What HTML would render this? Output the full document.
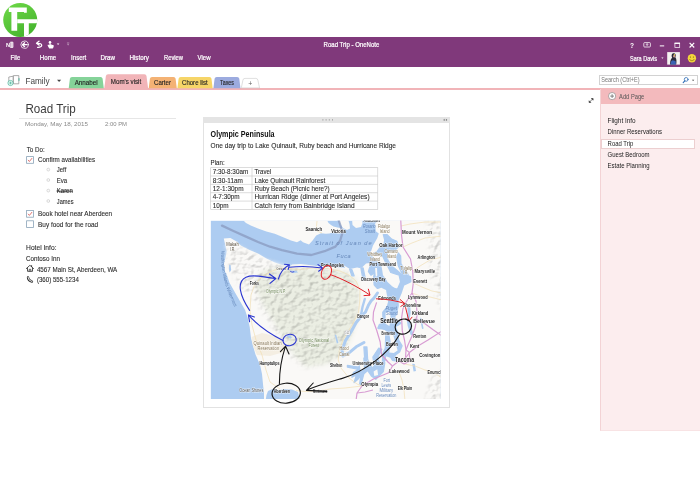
<!DOCTYPE html>
<html><head><meta charset="utf-8"><title>Road Trip - OneNote</title>
<style>
html,body{margin:0;padding:0;background:#fff;}
body{width:700px;height:500px;position:relative;overflow:hidden;font-family:"Liberation Sans",sans-serif;color:#222;}
.a{position:absolute;}
.tab{position:absolute;border-radius:3px 3px 0 0;}
svg{position:absolute;left:0;top:0;overflow:visible;}
svg text{font-family:"Liberation Sans",sans-serif;}
</style></head><body>

<!-- purple title / ribbon bar -->
<div id="bar" class="a" style="left:0;top:36.8px;width:700px;height:30.6px;background:#80397b;"></div>

<!-- section tabs row -->
<div id="tabline" class="a" style="left:0;top:87.7px;width:700px;height:2.6px;background:#f1b4b8;"></div>

<!-- search box -->
<div class="a" style="left:599.2px;top:75.4px;width:99px;height:9.8px;border:0.7px solid #d2d2d2;box-sizing:border-box;background:#fff;"></div>

<!-- page title underline -->
<div class="a" style="left:19px;top:117.9px;width:157.3px;height:0.8px;background:#e6e6e6;"></div>

<!-- note container -->
<div class="a" style="left:202.5px;top:116.7px;width:247.5px;height:291.5px;border:0.7px solid #e2e2e2;box-sizing:border-box;background:#fff;"></div>
<div class="a" style="left:202.5px;top:116.7px;width:247.5px;height:6px;background:#e4e4e4;"></div>

<!-- right page panel -->
<div class="a" style="left:600px;top:89px;width:100px;height:342px;background:#fcedee;border-left:1.2px solid #f3d3d5;border-bottom:1.5px solid #f8e3e4;box-sizing:border-box;"></div>
<div class="a" style="left:600.5px;top:87.7px;width:99.5px;height:16.2px;background:#f3babd;"></div>
<div class="a" style="left:600.5px;top:138.6px;width:94.5px;height:10px;background:#fff;border:0.6px solid #eccfd0;box-sizing:border-box;"></div>

<svg id="mapsvg" width="700" height="500" viewBox="0 0 700 500" style="opacity:0.999">
<defs>
<clipPath id="mapclip"><rect x="210.6" y="220.6" width="230.0" height="178.4"/></clipPath>
<filter id="soft" x="-5%" y="-5%" width="110%" height="110%"><feGaussianBlur stdDeviation="0.45"/></filter>
<filter id="soft2" x="-20%" y="-20%" width="140%" height="140%"><feGaussianBlur stdDeviation="2.2"/></filter>
<filter id="relief" x="0" y="0" width="100%" height="100%" color-interpolation-filters="sRGB"><feTurbulence type="fractalNoise" baseFrequency="0.17 0.21" numOctaves="2" seed="11" result="n"/><feDiffuseLighting in="n" surfaceScale="0.9" diffuseConstant="1" lighting-color="#fff" result="l"><feDistantLight azimuth="225" elevation="50"/></feDiffuseLighting><feColorMatrix in="l" type="matrix" values="0.8 0 0 0 0.37  0 0.8 0 0 0.37  0 0 0.8 0 0.37  0 0 0 1 0"/></filter>
<mask id="fmask"><g filter="url(#soft2)"><path d="M261.0 271.0 L275.0 267.5 L300.0 267.5 L322.0 269.5 L342.0 271.0 L356.0 278.0 L360.0 296.0 L357.0 320.0 L351.0 338.0 L343.0 354.0 L327.0 364.0 L306.0 367.0 L293.0 354.0 L283.0 338.0 L271.0 318.0 L261.0 301.0 L254.5 285.0 Z" fill="#fff"/></g></mask>
<mask id="hmask"><g filter="url(#soft2)"><path d="M226.0 243.0 L240.0 247.0 L262.0 259.0 L290.0 268.0 L325.0 269.0 L348.0 273.0 L357.0 290.0 L356.0 320.0 L349.0 340.0 L340.0 355.0 L322.0 364.0 L303.0 368.0 L290.0 356.0 L280.0 340.0 L268.0 320.0 L256.0 302.0 L246.0 292.0 L236.0 282.0 L229.0 264.0 Z" fill="#fff"/><path d="M427.0 219.0 L443.0 219.0 L443.0 312.0 L437.0 300.0 L431.0 270.0 L429.0 245.0 Z" fill="#fff"/><path d="M433.0 377.0 L443.0 370.0 L443.0 401.0 L424.0 401.0 Z" fill="#fff"/></g></mask>
</defs>
<g id="map" clip-path="url(#mapclip)">
<rect x="210.6" y="220.6" width="230.0" height="178.4" fill="#adccf1"/>
<g filter="url(#soft)">
<path d="M243.0 220.0 L246.0 223.0 L250.8 225.4 L258.0 228.4 L266.4 231.4 L274.8 233.8 L282.0 236.8 L285.0 238.0 L291.0 240.4 L297.0 242.2 L300.6 240.2 L303.0 242.2 L309.0 244.6 L312.6 240.4 L316.2 235.6 L321.0 233.2 L325.8 233.8 L329.4 233.4 L333.0 232.6 L338.0 233.6 L343.0 232.6 L344.4 230.4 L342.0 228.2 L337.5 227.4 L333.5 226.6 L331.0 225.0 L328.5 223.0 L326.5 219.0 L326.0 215.0 L243.0 215.0 Z" fill="#faf9f7"/>
<path d="M223.8 238.6 L230.4 238.0 L235.8 241.0 L241.2 245.8 L249.6 250.0 L258.0 253.6 L266.4 258.4 L274.8 262.6 L282.0 265.0 L290.0 266.2 L292.2 264.6 L300.6 264.0 L309.0 265.0 L318.6 266.2 L325.8 265.4 L333.0 266.8 L339.0 267.4 L345.0 268.0 L343.6 265.2 L347.4 267.4 L350.0 269.1 L357.1 267.4 L359.4 268.0 L362.0 267.4 L366.1 263.6 L371.7 262.7 L372.9 266.9 L377.3 261.3 L374.3 258.0 L370.2 254.1 L372.9 245.7 L377.3 238.0 L378.8 233.5 L375.8 231.3 L375.1 223.5 L378.8 220.1 L442.6 218.6 L442.6 401.0 L300.0 401.0 L298.0 392.0 L292.0 389.5 L285.0 389.0 L279.0 390.0 L272.0 389.3 L268.0 391.0 L266.5 395.0 L265.5 401.0 L264.0 401.0 L264.0 392.2 L263.3 387.0 L262.0 374.0 L260.1 364.9 L255.5 354.5 L252.9 345.4 L251.0 338.0 L249.7 327.0 L247.7 317.9 L245.1 310.1 L239.9 301.0 L234.7 291.9 L229.5 282.8 L226.9 275.0 L225.0 271.6 L223.8 264.4 L225.0 259.6 L226.8 251.2 L225.0 244.0 Z" fill="#faf9f7"/>
<path d="M251.5 337.0 L262.0 333.0 L275.0 336.0 L284.0 342.0 L284.0 352.0 L270.0 356.0 L257.0 355.0 L253.0 346.0 Z" fill="#f4eee2"/>
<g mask="url(#fmask)"><rect x="240" y="255" width="130" height="125" fill="#ebeee3"/></g>
<g mask="url(#hmask)" style="mix-blend-mode:multiply"><rect x="210" y="220" width="232" height="180" filter="url(#relief)"/></g>
<path d="M371.9 264.7 L376.3 261.9 L380.1 264.7 L381.2 270.8 L382.0 275.8 L384.6 279.1 L386.5 282.5 L391.1 286.9 L394.8 289.2 L397.8 289.7 L401.1 281.9 L399.6 275.2 L404.8 274.7 L410.1 276.9 L410.4 281.4 L403.4 284.7 L400.8 292.5 L397.4 300.3 L397.8 305.8 L395.6 314.7 L393.7 317.0 L396.3 320.3 L400.4 323.1 L397.8 324.8 L394.8 326.4 L397.1 332.6 L398.2 340.3 L401.6 345.9 L399.3 351.5 L394.8 354.8 L395.6 360.4 L392.6 359.8 L391.1 357.0 L385.1 354.8 L384.7 360.4 L382.8 362.6 L383.2 353.7 L385.8 348.1 L386.2 334.8 L388.8 332.6 L385.5 329.2 L381.3 328.1 L378.3 328.1 L379.8 324.8 L383.6 323.7 L383.2 312.5 L387.7 307.0 L389.2 301.9 L387.0 289.2 L381.3 286.4 L377.6 288.0 L374.6 284.7 L374.1 276.9 L375.6 271.3 L371.1 274.7 L368.9 271.3 L370.4 266.9 Z" fill="#adccf1" stroke="#adccf1" stroke-width="2.2" stroke-linejoin="round"/>
<path d="M400.6 275.2 L397.6 274.7 L390.8 272.5 L388.6 268.0 L385.6 262.4 L382.6 255.8 L376.6 254.6 L374.3 253.0 L377.3 251.3 L379.6 248.0 L383.3 247.4 L384.8 240.2 L383.3 234.6 L387.1 234.6 L391.6 239.1 L396.8 241.3 L398.3 246.9 L394.6 250.8 L388.6 250.8 L387.1 254.6 L387.8 260.2 L390.8 265.2 L395.3 269.1 L400.6 273.6 Z" fill="#adccf1" stroke="#adccf1" stroke-width="1.3" stroke-linejoin="round"/>
<path d="M402.1 273.6 L398.3 265.8 L396.8 256.9 L398.3 253.0 L400.6 255.8 L400.9 263.6 L405.1 270.2 L408.1 274.7 L405.8 275.2 Z" fill="#adccf1" stroke="#adccf1" stroke-width="1.3" stroke-linejoin="round"/>
<path d="M360.9 268.0 L363.1 268.0 L365.4 279.1 L363.1 280.2 Z" fill="#adccf1" stroke="#adccf1" stroke-width="1.3" stroke-linejoin="round"/>
<path d="M349.6 269.1 L351.9 269.7 L354.1 275.8 L351.9 275.8 Z" fill="#adccf1" stroke="#adccf1" stroke-width="1.3" stroke-linejoin="round"/>
<path d="M384.8 362.6 L383.3 371.5 L375.8 379.3 L371.4 376.0 L367.6 370.4 L363.9 373.7 L360.9 384.9 L359.7 383.8 L360.9 374.9 L357.9 379.3 L354.1 382.6 L356.4 374.9 L351.9 377.1 L353.4 372.6 L358.6 369.3 L347.4 367.1 L347.4 365.4 L358.6 367.1 L361.6 361.5 L364.6 357.0 L363.9 347.0 L366.9 347.0 L367.6 359.3 L372.1 368.2 L374.3 365.9 L372.9 357.0 L378.8 348.1 L381.8 349.3 L377.3 358.2 L380.3 363.7 Z" fill="#adccf1" stroke="#adccf1" stroke-width="1.3" stroke-linejoin="round"/>
<path d="M377.5 293.0 L374.0 298.0 L371.0 301.0 L368.5 305.0 L365.5 312.0 L361.0 316.5 L356.2 322.5 L351.4 331.2 L345.4 340.8 L342.0 350.4 L343.0 356.0 L349.0 352.8 L356.2 346.8 L364.0 342.5" fill="none" stroke="#adccf1" stroke-width="3" stroke-linejoin="round" stroke-linecap="round"/>
<path d="M364.8 299.0 L362.5 307.0 L361.0 315.0" fill="none" stroke="#adccf1" stroke-width="2.4" stroke-linejoin="round" stroke-linecap="round"/>
<path d="M408.8 306.4 L409.2 312.5 L408.1 319.2 L409.2 325.9 L411.8 333.7" fill="none" stroke="#adccf1" stroke-width="3" stroke-linejoin="round" stroke-linecap="round"/>
<path d="M420.8 318.6 L422.7 328.1" fill="none" stroke="#adccf1" stroke-width="1.6" stroke-linecap="round"/>
<path d="M229.2 264.5 L230.6 265.0 L231.2 270.0 L229.6 272.5 L228.8 269.0 Z" fill="#adccf1"/>
<path d="M287.5 269.1 L293.5 273.0 L298.0 272.5 L296.5 270.8 L291.2 270.8 Z" fill="#adccf1"/>
<path d="M286.0 335.9 L290.5 338.7 L292.0 337.6 L289.0 334.8 Z" fill="#adccf1"/>
<path d="M334.7 334.8 L336.9 343.7 L338.4 342.6 L336.2 334.8 Z" fill="#adccf1"/>
<path d="M412.2 363.8 L414.8 364.0 L416.0 371.0 L413.6 371.6 Z" fill="#adccf1"/>
<path d="M389.3 333.7 L393.1 334.8 L395.7 343.7 L397.6 350.4 L393.8 353.1 L389.3 352.6 L390.8 342.6 Z" fill="#faf9f7"/>
<path d="M385.6 312.5 L390.1 312.0 L390.8 320.3 L389.3 325.9 L385.6 323.7 Z" fill="#faf9f7"/>
<path d="M373.6 371.5 L377.3 369.3 L378.1 374.9 L374.3 376.0 Z" fill="#faf9f7"/>
<path d="M358.6 359.3 L363.1 357.0 L363.9 368.2 L360.9 371.5 Z" fill="#faf9f7"/>
<path d="M375.1 268.0 L377.0 268.0 L377.3 275.8 L375.8 276.9 Z" fill="#faf9f7"/>
<path d="M339.0 219.0 L340.0 224.0 L343.0 228.0 L347.0 230.0 L350.0 228.5 L349.5 224.0 L348.0 219.0 Z" fill="#faf9f7"/>
<path d="M352.0 219.0 L352.5 225.0 L356.0 228.0 L361.0 227.0 L362.5 223.0 L362.0 219.0 Z" fill="#faf9f7"/>
</g>
<path d="M222 225.6 L234 231.2 L246 236.6 L258 242 L270 246.7 L282 250.1 L297 253.6 L311.4 255 L324.6 251.2 L335.4 246.6 L340.2 240.4 L342.4 233 L340.6 226 L338.6 220" fill="none" stroke="#8a99bf" stroke-opacity="0.75" stroke-width="2.3" stroke-linejoin="round" stroke-linecap="round" filter="url(#soft)"/>
<path d="M359.8 300.0 L358.6 312.0 L352.6 324.0 L343.0 339.6 L339.4 350.4 L338.2 360.0 L341.0 368.0 L349.0 378.0 L357.0 384.0 L362.0 386.0" fill="none" stroke="#f0dcae" stroke-width="0.9" stroke-opacity="0.7" stroke-linejoin="round"/>
<path d="M362.0 386.0 L345.0 388.0 L330.0 389.0 L318.0 391.0 L305.0 391.5 L296.0 390.5" fill="none" stroke="#f0dcae" stroke-width="0.9" stroke-opacity="0.7" stroke-linejoin="round"/>
<path d="M359.8 300.0 L360.0 290.0 L356.0 281.0 L349.0 275.0 L340.0 271.0 L327.0 268.5 L312.0 268.0 L300.0 269.5 L290.0 268.5 L280.0 268.0 L270.0 272.0 L262.0 277.0 L255.0 284.0 L251.0 295.0 L250.0 310.0 L252.0 325.0 L256.0 340.0 L262.0 355.0 L266.0 370.0 L270.0 382.0 L280.0 389.0" fill="none" stroke="#f0dcae" stroke-width="0.9" stroke-opacity="0.7" stroke-linejoin="round"/>
<path d="M413.3 283.0 L422.0 287.0 L432.0 291.0 L442.0 293.0" fill="none" stroke="#f0dcae" stroke-width="0.9" stroke-opacity="0.7" stroke-linejoin="round"/>
<path d="M412.0 293.0 L420.0 296.0 L430.0 297.0 L442.0 300.0" fill="none" stroke="#f0dcae" stroke-width="0.9" stroke-opacity="0.7" stroke-linejoin="round"/>
<path d="M403.0 247.0 L412.0 243.0 L425.0 238.0 L442.0 236.0" fill="none" stroke="#f0dcae" stroke-width="0.9" stroke-opacity="0.7" stroke-linejoin="round"/>
<path d="M401.0 226.0 L410.0 224.0 L425.0 222.0 L442.0 222.0" fill="none" stroke="#f0dcae" stroke-width="0.9" stroke-opacity="0.7" stroke-linejoin="round"/>
<path d="M413.0 271.0 L420.0 266.0 L430.0 260.0 L442.0 257.0" fill="none" stroke="#f0dcae" stroke-width="0.9" stroke-opacity="0.7" stroke-linejoin="round"/>
<path d="M404.5 364.0 L415.0 366.0 L425.0 370.0 L433.0 372.0 L442.0 378.0" fill="none" stroke="#f0dcae" stroke-width="0.9" stroke-opacity="0.7" stroke-linejoin="round"/>
<path d="M399.0 372.0 L402.0 380.0 L404.0 390.0 L405.0 401.0" fill="none" stroke="#f0dcae" stroke-width="0.9" stroke-opacity="0.7" stroke-linejoin="round"/>
<path d="M317.0 221.0 L316.5 226.0 L317.0 231.0 L322.0 233.0" fill="none" stroke="#f0dcae" stroke-width="0.9" stroke-opacity="0.7" stroke-linejoin="round"/>
<path d="M400.7 219.0 L401.5 235.0 L403.0 247.0 L410.5 259.0 L412.7 271.0 L413.3 283.0 L412.0 293.0 L405.5 303.0 L402.9 309.0 L401.6 318.0 L402.3 331.0 L404.5 340.0 L406.0 350.0 L405.5 358.0 L399.0 361.0 L392.5 366.0 L388.6 372.7 L373.0 379.2 L362.0 386.0 L357.0 393.0 L356.0 401.0" fill="none" stroke="#d89cd3" stroke-width="1.2" stroke-linejoin="round"/>
<path d="M412.0 293.0 L416.0 301.0 L417.2 314.0 L415.3 327.0 L412.0 336.0 L408.0 345.0 L406.0 350.0" fill="none" stroke="#d89cd3" stroke-width="1.2" stroke-linejoin="round"/>
<path d="M414.6 318.0 L424.0 323.0 L432.8 329.6 L442.0 336.0" fill="none" stroke="#d89cd3" stroke-width="1.2" stroke-linejoin="round"/>
<path d="M376.6 302.4 L373.5 312.0 L373.0 320.0 L376.6 330.0 L380.2 342.0 L381.5 354.5 L388.0 362.0 L392.5 366.0" fill="none" stroke="#d89cd3" stroke-width="1.2" stroke-linejoin="round"/>
<path d="M405.5 358.0 L410.0 352.0 L418.0 346.0 L428.0 340.0 L442.0 331.0" fill="none" stroke="#d89cd3" stroke-width="1.2" stroke-linejoin="round"/>
<path d="M399.0 361.0 L404.0 364.0 L410.0 361.0 L409.0 352.0 L406.0 350.0" fill="none" stroke="#d89cd3" stroke-width="1.2" stroke-linejoin="round"/>
<path d="M357.0 393.0 L365.0 392.0 L373.0 390.0" fill="none" stroke="#d89cd3" stroke-width="1.2" stroke-linejoin="round"/>
<rect x="344.6" y="330.4" width="5.4" height="4.6" rx="1.6" fill="#fff" stroke="#aaa" stroke-width="0.4"/>
<text x="226.2" y="245.8" font-size="5" fill="#5e5443" textLength="12.6" lengthAdjust="spacingAndGlyphs" stroke="#fff" stroke-opacity="0.7" stroke-width="0.9" paint-order="stroke">Makah</text>
<text x="229.8" y="250.6" font-size="5" fill="#5e5443" textLength="5.4" lengthAdjust="spacingAndGlyphs" stroke="#fff" stroke-opacity="0.7" stroke-width="0.9" paint-order="stroke">I.R.</text>
<text x="305.4" y="231.4" font-size="5.6" fill="#1e1e1e" font-weight="bold" textLength="16.8" lengthAdjust="spacingAndGlyphs" stroke="#fff" stroke-opacity="0.7" stroke-width="0.9" paint-order="stroke">Saanich</text>
<text x="331.2" y="233.2" font-size="5.6" fill="#1e1e1e" font-weight="bold" textLength="14.4" lengthAdjust="spacingAndGlyphs" stroke="#fff" stroke-opacity="0.7" stroke-width="0.9" paint-order="stroke">Victoria</text>
<text x="321.0" y="266.6" font-size="5" fill="#1e1e1e" font-weight="bold" textLength="22.8" lengthAdjust="spacingAndGlyphs" stroke="#fff" stroke-opacity="0.7" stroke-width="0.9" paint-order="stroke">Port Angeles</text>
<text x="276.6" y="269.6" font-size="4.4" fill="#1e1e1e" textLength="9.4" lengthAdjust="spacingAndGlyphs" stroke="#fff" stroke-opacity="0.7" stroke-width="0.9" paint-order="stroke">Crescent</text>
<text x="402.0" y="234.0" font-size="5.8" fill="#1e1e1e" font-weight="bold" textLength="30.0" lengthAdjust="spacingAndGlyphs" stroke="#fff" stroke-opacity="0.7" stroke-width="0.9" paint-order="stroke">Mount Vernon</text>
<text x="379.2" y="247.4" font-size="5.6" fill="#1e1e1e" font-weight="bold" textLength="23.4" lengthAdjust="spacingAndGlyphs" stroke="#fff" stroke-opacity="0.7" stroke-width="0.9" paint-order="stroke">Oak Harbor</text>
<text x="417.6" y="258.6" font-size="5.4" fill="#1e1e1e" font-weight="bold" textLength="17.4" lengthAdjust="spacingAndGlyphs" stroke="#fff" stroke-opacity="0.7" stroke-width="0.9" paint-order="stroke">Arlington</text>
<text x="414.6" y="272.6" font-size="5.6" fill="#1e1e1e" font-weight="bold" textLength="20.4" lengthAdjust="spacingAndGlyphs" stroke="#fff" stroke-opacity="0.7" stroke-width="0.9" paint-order="stroke">Marysville</text>
<text x="369.6" y="266.4" font-size="5.2" fill="#1e1e1e" font-weight="bold" textLength="26.4" lengthAdjust="spacingAndGlyphs" stroke="#fff" stroke-opacity="0.7" stroke-width="0.9" paint-order="stroke">Port Townsend</text>
<text x="367.2" y="256.4" font-size="4.6" fill="#857455" textLength="15.0" lengthAdjust="spacingAndGlyphs" stroke="#fff" stroke-opacity="0.7" stroke-width="0.9" paint-order="stroke">Whidbey</text>
<text x="370.2" y="260.8" font-size="4.6" fill="#857455" textLength="9.6" lengthAdjust="spacingAndGlyphs" stroke="#fff" stroke-opacity="0.7" stroke-width="0.9" paint-order="stroke">Island</text>
<text x="384.6" y="253.4" font-size="4.6" fill="#857455" textLength="13.2" lengthAdjust="spacingAndGlyphs" stroke="#fff" stroke-opacity="0.7" stroke-width="0.9" paint-order="stroke">Camano</text>
<text x="387.0" y="257.8" font-size="4.6" fill="#857455" textLength="9.0" lengthAdjust="spacingAndGlyphs" stroke="#fff" stroke-opacity="0.7" stroke-width="0.9" paint-order="stroke">Island</text>
<text x="400.2" y="269.6" font-size="4.6" fill="#857455" textLength="12.0" lengthAdjust="spacingAndGlyphs" stroke="#fff" stroke-opacity="0.7" stroke-width="0.9" paint-order="stroke">Tulalip</text>
<text x="403.2" y="274.4" font-size="4.6" fill="#857455" textLength="4.8" lengthAdjust="spacingAndGlyphs" stroke="#fff" stroke-opacity="0.7" stroke-width="0.9" paint-order="stroke">I.R.</text>
<text x="378.0" y="228.2" font-size="4.6" fill="#857455" textLength="12.0" lengthAdjust="spacingAndGlyphs" stroke="#fff" stroke-opacity="0.7" stroke-width="0.9" paint-order="stroke">Fidalgo</text>
<text x="379.8" y="233.4" font-size="4.6" fill="#857455" textLength="9.6" lengthAdjust="spacingAndGlyphs" stroke="#fff" stroke-opacity="0.7" stroke-width="0.9" paint-order="stroke">Island</text>
<text x="363.0" y="228.2" font-size="4.6" fill="#6486b8" font-style="italic" textLength="12.6" lengthAdjust="spacingAndGlyphs">Rosario</text>
<text x="364.8" y="233.0" font-size="4.6" fill="#6486b8" font-style="italic" textLength="10.2" lengthAdjust="spacingAndGlyphs">Strait</text>
<text x="363.6" y="222.2" font-size="4.8" fill="#1e1e1e" font-weight="bold" textLength="16.4" lengthAdjust="spacingAndGlyphs" stroke="#fff" stroke-opacity="0.7" stroke-width="0.9" paint-order="stroke">Anacortes</text>
<text x="361.3" y="280.6" font-size="5" fill="#1e1e1e" font-weight="bold" textLength="24.1" lengthAdjust="spacingAndGlyphs" stroke="#fff" stroke-opacity="0.7" stroke-width="0.9" paint-order="stroke">Discovery Bay</text>
<text x="413.3" y="282.8" font-size="5.2" fill="#1e1e1e" font-weight="bold" textLength="13.7" lengthAdjust="spacingAndGlyphs" stroke="#fff" stroke-opacity="0.7" stroke-width="0.9" paint-order="stroke">Everett</text>
<text x="408.1" y="299.0" font-size="5.2" fill="#1e1e1e" font-weight="bold" textLength="19.5" lengthAdjust="spacingAndGlyphs" stroke="#fff" stroke-opacity="0.7" stroke-width="0.9" paint-order="stroke">Lynnwood</text>
<text x="402.9" y="307.4" font-size="5.2" fill="#1e1e1e" font-weight="bold" textLength="18.2" lengthAdjust="spacingAndGlyphs" stroke="#fff" stroke-opacity="0.7" stroke-width="0.9" paint-order="stroke">Shoreline</text>
<text x="412.0" y="315.2" font-size="5.4" fill="#1e1e1e" font-weight="bold" textLength="16.3" lengthAdjust="spacingAndGlyphs" stroke="#fff" stroke-opacity="0.7" stroke-width="0.9" paint-order="stroke">Kirkland</text>
<text x="380.2" y="323.0" font-size="7" fill="#1e1e1e" font-weight="bold" textLength="17.5" lengthAdjust="spacingAndGlyphs" stroke="#fff" stroke-opacity="0.7" stroke-width="0.9" paint-order="stroke">Seattle</text>
<text x="413.3" y="322.8" font-size="6.2" fill="#1e1e1e" font-weight="bold" textLength="21.5" lengthAdjust="spacingAndGlyphs" stroke="#fff" stroke-opacity="0.7" stroke-width="0.9" paint-order="stroke">Bellevue</text>
<text x="381.5" y="335.2" font-size="4.8" fill="#1e1e1e" font-weight="bold" textLength="13.6" lengthAdjust="spacingAndGlyphs" stroke="#fff" stroke-opacity="0.7" stroke-width="0.9" paint-order="stroke">Bremerton</text>
<text x="413.3" y="337.8" font-size="5" fill="#1e1e1e" font-weight="bold" textLength="13.0" lengthAdjust="spacingAndGlyphs" stroke="#fff" stroke-opacity="0.7" stroke-width="0.9" paint-order="stroke">Renton</text>
<text x="385.4" y="309.8" font-size="4.8" fill="#6486b8" font-style="italic" textLength="11.6" lengthAdjust="spacingAndGlyphs">Puget</text>
<text x="386.0" y="315.4" font-size="4.8" fill="#6486b8" font-style="italic" textLength="11.7" lengthAdjust="spacingAndGlyphs">Sound</text>
<text x="357.2" y="317.6" font-size="4.8" fill="#1e1e1e" font-weight="bold" textLength="11.9" lengthAdjust="spacingAndGlyphs" stroke="#fff" stroke-opacity="0.7" stroke-width="0.9" paint-order="stroke">Bangor</text>
<text x="378.2" y="300.0" font-size="5" fill="#1e1e1e" font-weight="bold" textLength="17.6" lengthAdjust="spacingAndGlyphs" stroke="#fff" stroke-opacity="0.7" stroke-width="0.9" paint-order="stroke">Edmonds</text>
<text x="386.0" y="345.8" font-size="5" fill="#1e1e1e" font-weight="bold" textLength="11.7" lengthAdjust="spacingAndGlyphs" stroke="#fff" stroke-opacity="0.7" stroke-width="0.9" paint-order="stroke">Burien</text>
<text x="410.0" y="347.8" font-size="5.4" fill="#1e1e1e" font-weight="bold" textLength="9.2" lengthAdjust="spacingAndGlyphs" stroke="#fff" stroke-opacity="0.7" stroke-width="0.9" paint-order="stroke">Kent</text>
<text x="395.1" y="361.8" font-size="6.4" fill="#1e1e1e" font-weight="bold" textLength="18.9" lengthAdjust="spacingAndGlyphs" stroke="#fff" stroke-opacity="0.7" stroke-width="0.9" paint-order="stroke">Tacoma</text>
<text x="419.2" y="357.2" font-size="5.4" fill="#1e1e1e" font-weight="bold" textLength="21.2" lengthAdjust="spacingAndGlyphs" stroke="#fff" stroke-opacity="0.7" stroke-width="0.9" paint-order="stroke">Covington</text>
<text x="389.3" y="372.6" font-size="5" fill="#1e1e1e" font-weight="bold" textLength="20.1" lengthAdjust="spacingAndGlyphs" stroke="#fff" stroke-opacity="0.7" stroke-width="0.9" paint-order="stroke">Lakewood</text>
<text x="427.6" y="373.8" font-size="5" fill="#1e1e1e" font-weight="bold" textLength="18.4" lengthAdjust="spacingAndGlyphs" stroke="#fff" stroke-opacity="0.7" stroke-width="0.9" paint-order="stroke">Enumclaw</text>
<text x="352.6" y="364.8" font-size="4.8" fill="#1e1e1e" font-weight="bold" textLength="30.8" lengthAdjust="spacingAndGlyphs" stroke="#fff" stroke-opacity="0.7" stroke-width="0.9" paint-order="stroke">University Place</text>
<text x="361.3" y="386.4" font-size="5.8" fill="#1e1e1e" font-weight="bold" textLength="16.9" lengthAdjust="spacingAndGlyphs" stroke="#fff" stroke-opacity="0.7" stroke-width="0.9" paint-order="stroke">Olympia</text>
<text x="383.4" y="381.8" font-size="4.6" fill="#6486b8" textLength="6.6" lengthAdjust="spacingAndGlyphs" stroke="#fff" stroke-opacity="0.7" stroke-width="0.9" paint-order="stroke">Fort</text>
<text x="381.5" y="386.6" font-size="4.6" fill="#6486b8" textLength="9.7" lengthAdjust="spacingAndGlyphs" stroke="#fff" stroke-opacity="0.7" stroke-width="0.9" paint-order="stroke">Lewis</text>
<text x="379.5" y="391.8" font-size="4.6" fill="#6486b8" textLength="13.7" lengthAdjust="spacingAndGlyphs" stroke="#fff" stroke-opacity="0.7" stroke-width="0.9" paint-order="stroke">Military</text>
<text x="376.3" y="396.6" font-size="4.6" fill="#6486b8" textLength="20.1" lengthAdjust="spacingAndGlyphs" stroke="#fff" stroke-opacity="0.7" stroke-width="0.9" paint-order="stroke">Reservation</text>
<text x="397.7" y="389.8" font-size="5" fill="#1e1e1e" font-weight="bold" textLength="14.3" lengthAdjust="spacingAndGlyphs" stroke="#fff" stroke-opacity="0.7" stroke-width="0.9" paint-order="stroke">Elk Plain</text>
<text x="298.7" y="342.0" font-size="4.8" fill="#6e8656" textLength="30.5" lengthAdjust="spacingAndGlyphs" stroke="#fff" stroke-opacity="0.7" stroke-width="0.9" paint-order="stroke">Olympic National</text>
<text x="308.4" y="346.6" font-size="4.8" fill="#6e8656" textLength="10.4" lengthAdjust="spacingAndGlyphs" stroke="#fff" stroke-opacity="0.7" stroke-width="0.9" paint-order="stroke">Forest</text>
<text x="339.5" y="350.4" font-size="4.8" fill="#857455" textLength="9.0" lengthAdjust="spacingAndGlyphs" stroke="#fff" stroke-opacity="0.7" stroke-width="0.9" paint-order="stroke">Hood</text>
<text x="339.0" y="356.2" font-size="4.8" fill="#857455" textLength="10.4" lengthAdjust="spacingAndGlyphs" stroke="#fff" stroke-opacity="0.7" stroke-width="0.9" paint-order="stroke">Canal</text>
<text x="329.9" y="367.2" font-size="4.8" fill="#1e1e1e" font-weight="bold" textLength="12.3" lengthAdjust="spacingAndGlyphs" stroke="#fff" stroke-opacity="0.7" stroke-width="0.9" paint-order="stroke">Shelton</text>
<text x="313.0" y="392.8" font-size="4.8" fill="#1e1e1e" font-weight="bold" textLength="14.3" lengthAdjust="spacingAndGlyphs" stroke="#fff" stroke-opacity="0.7" stroke-width="0.9" paint-order="stroke">Montesano</text>
<text x="253.6" y="344.6" font-size="5.2" fill="#857455" textLength="27.9" lengthAdjust="spacingAndGlyphs" stroke="#fff" stroke-opacity="0.7" stroke-width="0.9" paint-order="stroke">Quinault Indian</text>
<text x="257.5" y="350.0" font-size="5.2" fill="#857455" textLength="21.5" lengthAdjust="spacingAndGlyphs" stroke="#fff" stroke-opacity="0.7" stroke-width="0.9" paint-order="stroke">Reservation</text>
<text x="259.4" y="364.6" font-size="4.8" fill="#1e1e1e" font-weight="bold" textLength="20.2" lengthAdjust="spacingAndGlyphs" stroke="#fff" stroke-opacity="0.7" stroke-width="0.9" paint-order="stroke">Humptulips</text>
<text x="239.3" y="392.4" font-size="4.8" fill="#555" textLength="24.0" lengthAdjust="spacingAndGlyphs" stroke="#fff" stroke-opacity="0.7" stroke-width="0.9" paint-order="stroke">Ocean Shores</text>
<text x="273.7" y="393.2" font-size="4.8" fill="#1e1e1e" font-weight="bold" textLength="16.3" lengthAdjust="spacingAndGlyphs" stroke="#fff" stroke-opacity="0.7" stroke-width="0.9" paint-order="stroke">Aberdeen</text>
<text x="249.7" y="285.4" font-size="4.8" fill="#1e1e1e" font-weight="bold" textLength="9.1" lengthAdjust="spacingAndGlyphs" stroke="#fff" stroke-opacity="0.7" stroke-width="0.9" paint-order="stroke">Forks</text>
<text x="265.9" y="293.2" font-size="4.8" fill="#6e8656" textLength="20.1" lengthAdjust="spacingAndGlyphs" stroke="#fff" stroke-opacity="0.7" stroke-width="0.9" paint-order="stroke">Olympic N.P.</text>
<text x="345.3" y="334.0" font-size="3" fill="#666" textLength="4.0" lengthAdjust="spacingAndGlyphs" stroke="#fff" stroke-opacity="0.7" stroke-width="0.9" paint-order="stroke">101</text>
<text x="315" y="245.4" font-size="5.6" fill="#6486b8" font-style="italic" textLength="56.5" lengthAdjust="spacing">Strait of Juan de</text>
<text x="336.6" y="258" font-size="5.6" fill="#6486b8" font-style="italic" textLength="14" lengthAdjust="spacing">Fuca</text>
<path id="wiw" d="M221.6 251 C220 268 225 288 234.5 307" fill="none"/>
<text font-size="4.6" fill="#5f82b6"><textPath href="#wiw" textLength="58" lengthAdjust="spacingAndGlyphs">Washington Islands Wilderness</textPath></text>
</g>
<g id="ink">
<path d="M283 340.5 C274 336 260 328 248.6 315.2 M248.4 315 L249.6 321.8 M248.4 315 L254.4 317" fill="none" stroke="#2a35d0" stroke-width="1.1" stroke-linecap="round" stroke-linejoin="round"/>
<path d="M249.6 310.4 C240 296 236 282 246 277.2 C254 273.5 263 277.5 275.2 278.4 M269.4 274 L275.8 278.5 L270 283.4" fill="none" stroke="#2a35d0" stroke-width="1.1" stroke-linecap="round" stroke-linejoin="round"/>
<path d="M278.4 279 C280 273 283.5 268 289 265 M284.5 264.2 L289.4 264.8 L288.2 269.4" fill="none" stroke="#2a35d0" stroke-width="1.1" stroke-linecap="round" stroke-linejoin="round"/>
<path d="M289.4 267.2 C300 266 311 266.2 322.2 268 M318 264.6 L322.8 268.1 L318.6 271.2" fill="none" stroke="#2a35d0" stroke-width="1.1" stroke-linecap="round" stroke-linejoin="round"/>
<path d="M290.5 271.6 q1.6 1.4 3.4 0.2" fill="none" stroke="#2a35d0" stroke-width="0.8" stroke-linecap="round" stroke-linejoin="round"/>
<ellipse cx="289.6" cy="340" rx="6.7" ry="5.7" fill="none" stroke="#2a35d0" stroke-width="1.1" transform="rotate(-12 289.6 340)"/>
<ellipse cx="326.4" cy="272.4" rx="4.8" ry="7.2" fill="none" stroke="#e0222a" stroke-width="1.0" transform="rotate(22 326.4 272.4)"/>
<path d="M330.4 274.6 C343 279 357 286.5 369.6 294.8 M368.4 289.2 L370 295.2 L364 295.6" fill="none" stroke="#e0222a" stroke-width="1.0" stroke-linecap="round" stroke-linejoin="round"/>
<path d="M376.4 298.8 C386 299 396 300.6 404.6 303.4 M400.2 299.6 L405 303.7 L400.8 306.4" fill="none" stroke="#e0222a" stroke-width="1.0" stroke-linecap="round" stroke-linejoin="round"/>
<path d="M405.6 307.6 C406.6 312 407.8 316 408.8 320.6 M405.8 318.8 L408.9 321 L412 317.2" fill="none" stroke="#e0222a" stroke-width="1.0" stroke-linecap="round" stroke-linejoin="round"/>
<ellipse cx="403.3" cy="326.6" rx="8.4" ry="7.4" fill="none" stroke="#161616" stroke-width="1.2" transform="rotate(-25 403.3 326.6)"/>
<path d="M399.4 334.8 C390 352 365 372 341.6 378.6 C330 382 318 385.4 307 390 M313.2 383 L306.4 390.4 L326.6 391.4" fill="none" stroke="#161616" stroke-width="1.1" stroke-linecap="round" stroke-linejoin="round"/>
<ellipse cx="286.2" cy="393.2" rx="14.2" ry="10" fill="none" stroke="#161616" stroke-width="1.2" transform="rotate(-4 286.2 393.2)"/>
<path d="M279.4 383.6 C279.4 371 281.6 358 285.4 346.6 M280.4 351.6 L285.6 346.2 L289 354" fill="none" stroke="#161616" stroke-width="1.1" stroke-linecap="round" stroke-linejoin="round"/>
</g>
</svg>

<!-- text + icon overlay -->
<svg id="ov" width="700" height="500" viewBox="0 0 700 500" style="opacity:0.999">
<defs><linearGradient id="lg" x1="0.2" y1="0" x2="0.8" y2="1"><stop offset="0" stop-color="#6cd746"/><stop offset="1" stop-color="#43b22c"/></linearGradient></defs>
<!-- logo -->
<clipPath id="lgc"><circle cx="20.2" cy="20" r="17"/></clipPath>
<g>
<circle cx="20.2" cy="20" r="17" fill="url(#lg)"/>
<g clip-path="url(#lgc)" fill="#fff">
<path d="M8.8 7.6 H26.8 V12.8 H24 V12 H17.2 V30.8 H11.4 V12 H8.8 Z"/>
<path d="M17.2 19.2 H38 V23.2 H28.8 V38 H24 V23.2 H17.2 Z"/>
</g>
</g>


<!-- quick access toolbar icons -->
<g id="qat" fill="none" stroke="#fff" stroke-linecap="round" stroke-linejoin="round">
<text x="5.9" y="46.8" font-size="5.6" font-weight="bold" fill="#fff" stroke="none">N</text>
<path d="M10.6 42.2 H13 V47.4 H10.6 Z M11.8 42.2 V47.4" stroke-width="0.7" fill="#fff" fill-opacity="0.55"/>
<circle cx="24.6" cy="44.7" r="3.7" stroke-width="0.75"/>
<path d="M27 44.7 H23.2 M24.6 42.7 L22.5 44.7 L24.6 46.7" stroke-width="1.25"/>
<path d="M37.6 47.3 C43 47.6 43.2 42.9 37.4 43.3 M39 41.2 L36.5 43.3 L39.2 45.2" stroke-width="1.25"/>
<circle cx="50" cy="42.2" r="1.25" fill="#fff" stroke="none"/><path d="M50 43.4 V46 M48.2 45.2 L49.6 47.9 H52.6 L53.2 45.8 L50.4 44.9" stroke-width="1.2" fill="#fff"/>
<path d="M56.8 43.5 H59.4 L58.1 45 Z" fill="#fff" stroke="none"/>
<path d="M67.3 43 H68.9" stroke-width="0.6" stroke-opacity="0.7"/><path d="M67.2 44.2 H69 L68.1 45.4 Z" fill="#fff" fill-opacity="0.7" stroke="none"/>
</g>
<!-- window controls -->
<g id="wc" fill="none" stroke="#fff" stroke-linecap="butt">
<text x="629.9" y="47.8" font-size="6.6" font-weight="bold" fill="#fff" stroke="none">?</text>
<rect x="643.8" y="42.6" width="6.6" height="4.4" rx="0.8" stroke-width="0.75"/>
<path d="M647.1 46 V43.8 M646 44.8 L647.1 43.6 L648.2 44.8" stroke-width="0.7"/>
<path d="M659.8 45.9 H664.2" stroke-width="1.0"/>
<rect x="674.9" y="43.2" width="4.8" height="4.2" stroke-width="0.7"/><path d="M674.6 43.3 H680" stroke-width="1.3"/>
<path d="M689.6 42.9 L694.2 47.5 M694.2 42.9 L689.6 47.5" stroke-width="1.15"/>
<path d="M661.3 57.5 H663.5 L662.4 58.8 Z" fill="#fff" stroke="none"/>
</g>
<!-- avatar -->
<g id="avatar">
<rect x="667.2" y="52.1" width="12.7" height="12.5" fill="#f4f2f0"/>
<path d="M670 64.6 C670 60.5 671.3 58.6 672.2 57.6 C671 55.6 671.8 53.2 673.6 53.2 C675.6 53.2 676.3 55.2 675.4 57.4 C676.8 58.8 676.6 62 676.2 64.6 Z" fill="#2b2a3a"/>
<ellipse cx="674.2" cy="56.2" rx="1.1" ry="1.4" fill="#c99b86"/>
<path d="M670.4 64.6 C670.6 62 671.4 60.6 672.6 60.2 L675.6 61 L676 64.6 Z" fill="#3a62b4"/>
<circle cx="674.4" cy="54.6" r="0.7" fill="#e8d44a"/>
</g>
<!-- smiley -->
<g id="smiley">
<circle cx="691.9" cy="58.2" r="4.2" fill="#f4d63c"/>
<circle cx="690.4" cy="57" r="0.6" fill="#6b5a10"/><circle cx="693.4" cy="57" r="0.6" fill="#6b5a10"/>
<path d="M689.6 59.4 C690.6 61.2 693.2 61.2 694.2 59.4" fill="none" stroke="#6b5a10" stroke-width="0.6" stroke-linecap="round"/>
</g>

<g fill="#fff" font-size="6.9" stroke="#fff" stroke-width="0.22">
<text x="323.6" y="47.4" textLength="55.7" lengthAdjust="spacingAndGlyphs">Road Trip - OneNote</text>
<text x="10.6" y="60.2" textLength="9.6" lengthAdjust="spacingAndGlyphs">File</text>
<text x="39.8" y="60.2" textLength="16.4" lengthAdjust="spacingAndGlyphs">Home</text>
<text x="71.1" y="60.2" textLength="15.1" lengthAdjust="spacingAndGlyphs">Insert</text>
<text x="100.6" y="60.2" textLength="14.4" lengthAdjust="spacingAndGlyphs">Draw</text>
<text x="129.4" y="60.2" textLength="19.6" lengthAdjust="spacingAndGlyphs">History</text>
<text x="164" y="60.2" textLength="19" lengthAdjust="spacingAndGlyphs">Review</text>
<text x="197.6" y="60.2" textLength="13" lengthAdjust="spacingAndGlyphs">View</text>
<text x="630" y="60.6" textLength="27" lengthAdjust="spacingAndGlyphs">Sara Davis</text>
</g>

<g id="tabs">
<path d="M68.7 88.2 L69.9 78.8 Q70.2 77.0 72.0 77.0 H100.5 Q102.3 77.0 102.6 78.8 L103.8 88.2 Z" fill="#85d399"/>
<path d="M104.3 88.2 L105.9 76.0 Q106.2 74.2 108.0 74.2 H144.4 Q146.2 74.2 146.5 76.0 L148.1 88.2 Z" fill="#f1b4b8"/>
<path d="M148.7 88.2 L149.9 78.8 Q150.2 77.0 152.0 77.0 H173.5 Q175.3 77.0 175.6 78.8 L176.8 88.2 Z" fill="#f4b274"/>
<path d="M177.4 88.2 L178.6 78.8 Q178.9 77.0 180.7 77.0 H209.4 Q211.2 77.0 211.5 78.8 L212.7 88.2 Z" fill="#f6d568"/>
<path d="M213.4 88.2 L214.6 78.8 Q214.9 77.0 216.7 77.0 H237.2 Q239.0 77.0 239.3 78.8 L240.5 88.2 Z" fill="#9cabdf"/>
<path d="M241.3 87.9 L242.9 80.2 Q243.2 78.4 245.0 78.4 H255.8 Q257.6 78.4 257.9 80.2 L259.5 87.9 Z" fill="#fff" stroke="#c9c9c9" stroke-width="0.6"/>
</g>
<!-- notebook + tabs -->
<!-- notebook icon -->
<g id="nbicon" fill="#fff" stroke="#8a8a8a" stroke-width="0.7" stroke-linejoin="round">
<path d="M8.8 77 L13.2 76.2 V83.6 L8.8 84.2 Z"/>
<path d="M13.4 75.6 H18.8 V83.8 H13.4 Z"/>
<path d="M19 78.2 V80.8" stroke="#4bb39a" stroke-width="1"/>
<circle cx="10.5" cy="83" r="2.6" stroke="#4bb39a" fill="#eafaf5" stroke-width="0.7"/>
<path d="M10.5 81.6 V84.4 M9.1 83 H11.9" stroke="#4bb39a" stroke-width="0.7"/>
</g>
<path d="M57 79.8 H61.2 L59.1 82 Z" fill="#444"/>

<text x="25.4" y="83.6" font-size="9.2" fill="#444" textLength="24.2" lengthAdjust="spacingAndGlyphs">Family</text>
<g font-size="6.6" fill="#222" stroke="#222" stroke-width="0.12">
<text x="74.7" y="85" textLength="23" lengthAdjust="spacingAndGlyphs">Annabel</text>
<text x="110.8" y="83.8" textLength="30.4" lengthAdjust="spacingAndGlyphs">Mom's visit</text>
<text x="154" y="85" textLength="17" lengthAdjust="spacingAndGlyphs">Carter</text>
<text x="182" y="85" textLength="25.6" lengthAdjust="spacingAndGlyphs">Chore list</text>
<text x="220" y="85" textLength="14" lengthAdjust="spacingAndGlyphs">Taxes</text>
<text x="248.3" y="85.6" font-size="7" fill="#666" stroke="none">+</text>
</g>
<text x="601.2" y="82.4" font-size="6.4" fill="#777" textLength="38.4" lengthAdjust="spacingAndGlyphs">Search (Ctrl+E)</text>

<!-- search icon, add page icon, expand icon -->
<g fill="none" stroke="#2f6db5" stroke-width="0.8" stroke-linecap="round"><circle cx="686.2" cy="79.4" r="1.9"/><path d="M684.8 80.9 L683.2 82.7" stroke-width="1.1"/></g>
<path d="M691.9 79.8 H694.3 L693.1 81.1 Z" fill="#444"/>
<circle cx="612.1" cy="96.1" r="3.6" fill="#fff" stroke="#7a7a7a" stroke-width="0.6"/>
<path d="M612.1 94.2 V98 M610.2 96.1 H614" stroke="#6a6a6a" stroke-width="0.8" fill="none"/>
<g stroke="#444" stroke-width="0.7" fill="#444" stroke-linejoin="round"><path d="M589.4 102.2 L592.8 98.8" fill="none"/><path d="M591.4 98.5 H593.1 V100.2 Z"/><path d="M589.1 100.8 V102.5 H590.8 Z"/></g>
<!-- page title -->
<text x="25.4" y="113.3" font-size="13.2" fill="#3c3c3c" textLength="50.4" lengthAdjust="spacingAndGlyphs">Road Trip</text>
<g font-size="5.9" fill="#888">
<text x="25" y="126.1" textLength="63" lengthAdjust="spacingAndGlyphs">Monday, May 18, 2015</text>
<text x="105" y="126.1" textLength="22" lengthAdjust="spacingAndGlyphs">2:00 PM</text>
</g>

<!-- body text -->
<g font-size="7.1" fill="#2a2a2a" stroke="#2a2a2a" stroke-width="0.1">
<text x="26.7" y="151.5" textLength="18" lengthAdjust="spacingAndGlyphs">To Do:</text>
<text x="38" y="162.4" textLength="57.1" lengthAdjust="spacingAndGlyphs">Confirm availabilities</text>
<text x="56.8" y="172.3" textLength="9.5" lengthAdjust="spacingAndGlyphs">Jeff</text>
<text x="56.8" y="182.6" textLength="10.4" lengthAdjust="spacingAndGlyphs">Eva</text>
<text x="56.8" y="193.2" textLength="16" lengthAdjust="spacingAndGlyphs" text-decoration="line-through">Karen</text>
<text x="56.8" y="203.7" textLength="16.7" lengthAdjust="spacingAndGlyphs">James</text>
<text x="38" y="216.4" textLength="74.2" lengthAdjust="spacingAndGlyphs">Book hotel near Aberdeen</text>
<text x="38" y="226.7" textLength="60.2" lengthAdjust="spacingAndGlyphs">Buy food for the road</text>
<text x="26.1" y="250.4" textLength="30.4" lengthAdjust="spacingAndGlyphs">Hotel Info:</text>
<text x="26.1" y="261.2" textLength="33.8" lengthAdjust="spacingAndGlyphs">Contoso Inn</text>
<text x="36.9" y="271.6" textLength="80.4" lengthAdjust="spacingAndGlyphs">4567 Main St, Aberdeen, WA</text>
<text x="36.9" y="282.2" textLength="41.9" lengthAdjust="spacingAndGlyphs">(360) 555-1234</text>
</g>

<!-- home + phone icons -->
<g fill="none" stroke="#2a2a2a" stroke-width="0.8" stroke-linejoin="round" stroke-linecap="round">
<path d="M26.3 268.6 L29.9 265.3 L33.6 268.6"/>
<path d="M27.5 268 V271.3 H32.5 V268"/>
<path d="M29.2 271.2 V269.3 H30.8 V271.2" stroke-width="0.7"/>
<path d="M31.6 265.6 V266.6" stroke-width="0.9"/>
<path d="M28 277.4 Q28.3 280.9 32 281.6" stroke-width="2.3"/><path d="M28 277.4 Q28.3 280.9 32 281.6" stroke="#fff" stroke-width="0.9"/>
</g>
<!-- checkboxes -->
<g fill="#fff" stroke="#8aa4b8" stroke-width="0.8">
<rect x="26.6" y="156.6" width="6.9" height="6.7"/>
<rect x="26.6" y="210.5" width="6.9" height="6.7"/>
<rect x="26.6" y="220.8" width="6.9" height="6.7"/>
</g>
<g fill="none" stroke="#d9534f" stroke-width="0.8">
<path d="M28 159.9 l1.4 1.6 l2.7 -3.4"/>
<path d="M28 213.8 l1.4 1.6 l2.7 -3.4"/>
</g>
<g fill="#fafafa" stroke="#c4c4c4" stroke-width="0.6">
<circle cx="48.3" cy="169.6" r="1.4"/><circle cx="48.3" cy="180" r="1.4"/><circle cx="48.3" cy="190.6" r="1.4"/><circle cx="48.3" cy="201" r="1.4"/>
</g>

<!-- container grip + arrows -->
<g fill="#8c8c8c"><rect x="322.4" y="119.4" width="1" height="1"/><rect x="325.6" y="119.4" width="1" height="1"/><rect x="328.8" y="119.4" width="1" height="1"/><rect x="332" y="119.4" width="1" height="1"/>
<path d="M444.6 118.7 V121.1 L443.2 119.9 Z M445.9 118.7 V121.1 L447.3 119.9 Z" fill="#6a6a6a"/></g>
<!-- note container text -->
<text x="210.6" y="137.1" font-size="8.4" font-weight="bold" fill="#111" textLength="64" lengthAdjust="spacingAndGlyphs">Olympic Peninsula</text>
<g font-size="7.1" fill="#2a2a2a" stroke="#2a2a2a" stroke-width="0.1">
<text x="210.6" y="147.6" textLength="185.4" lengthAdjust="spacingAndGlyphs">One day trip to Lake Quinault, Ruby beach and Hurricane Ridge</text>
<text x="210.6" y="165" textLength="14" lengthAdjust="spacingAndGlyphs">Plan:</text>
</g>

<!-- plan table -->
<g fill="none" stroke="#c6c6c6" stroke-width="0.6">
<rect x="210.7" y="167.7" width="167.1" height="41.7"/>
<path d="M252 167.7 V209.4 M210.7 176.0 H377.8 M210.7 184.4 H377.8 M210.7 192.7 H377.8 M210.7 201.1 H377.8"/>
</g>
<g font-size="7.1" fill="#2a2a2a" stroke="#2a2a2a" stroke-width="0.1">
<text x="212.7" y="174.3" textLength="35.5" lengthAdjust="spacingAndGlyphs">7:30-8:30am</text><text x="254.6" y="174.3" textLength="16.7" lengthAdjust="spacingAndGlyphs">Travel</text>
<text x="212.7" y="182.6" textLength="30.3" lengthAdjust="spacingAndGlyphs">8:30-11am</text><text x="254.6" y="182.6" textLength="70.7" lengthAdjust="spacingAndGlyphs">Lake Quinault Rainforest</text>
<text x="212.7" y="191.0" textLength="30.9" lengthAdjust="spacingAndGlyphs">12-1:30pm</text><text x="254.6" y="191.0" textLength="75.1" lengthAdjust="spacingAndGlyphs">Ruby Beach (Picnic here?)</text>
<text x="212.7" y="199.3" textLength="27.0" lengthAdjust="spacingAndGlyphs">4-7:30pm</text><text x="254.6" y="199.3" textLength="115.0" lengthAdjust="spacingAndGlyphs">Hurrican Ridge (dinner at Port Angeles)</text>
<text x="212.7" y="207.7" textLength="16.0" lengthAdjust="spacingAndGlyphs">10pm</text><text x="254.6" y="207.7" textLength="100.1" lengthAdjust="spacingAndGlyphs">Catch ferry from Bainbridge Island</text>
</g>

<!-- right panel text -->
<text x="619.1" y="98.6" font-size="6.8" fill="#555" textLength="25.2" lengthAdjust="spacingAndGlyphs">Add Page</text>
<g font-size="6.6" fill="#222">
<text x="607.6" y="123.3" textLength="28" lengthAdjust="spacingAndGlyphs">Flight Info</text>
<text x="607.6" y="134.4" textLength="54.4" lengthAdjust="spacingAndGlyphs">Dinner Reservations</text>
<text x="607.6" y="145.8" textLength="25.8" lengthAdjust="spacingAndGlyphs">Road Trip</text>
<text x="607.6" y="157" textLength="42" lengthAdjust="spacingAndGlyphs">Guest Bedroom</text>
<text x="607.6" y="168.4" textLength="42" lengthAdjust="spacingAndGlyphs">Estate Planning</text>
</g>
</svg>

</body></html>
